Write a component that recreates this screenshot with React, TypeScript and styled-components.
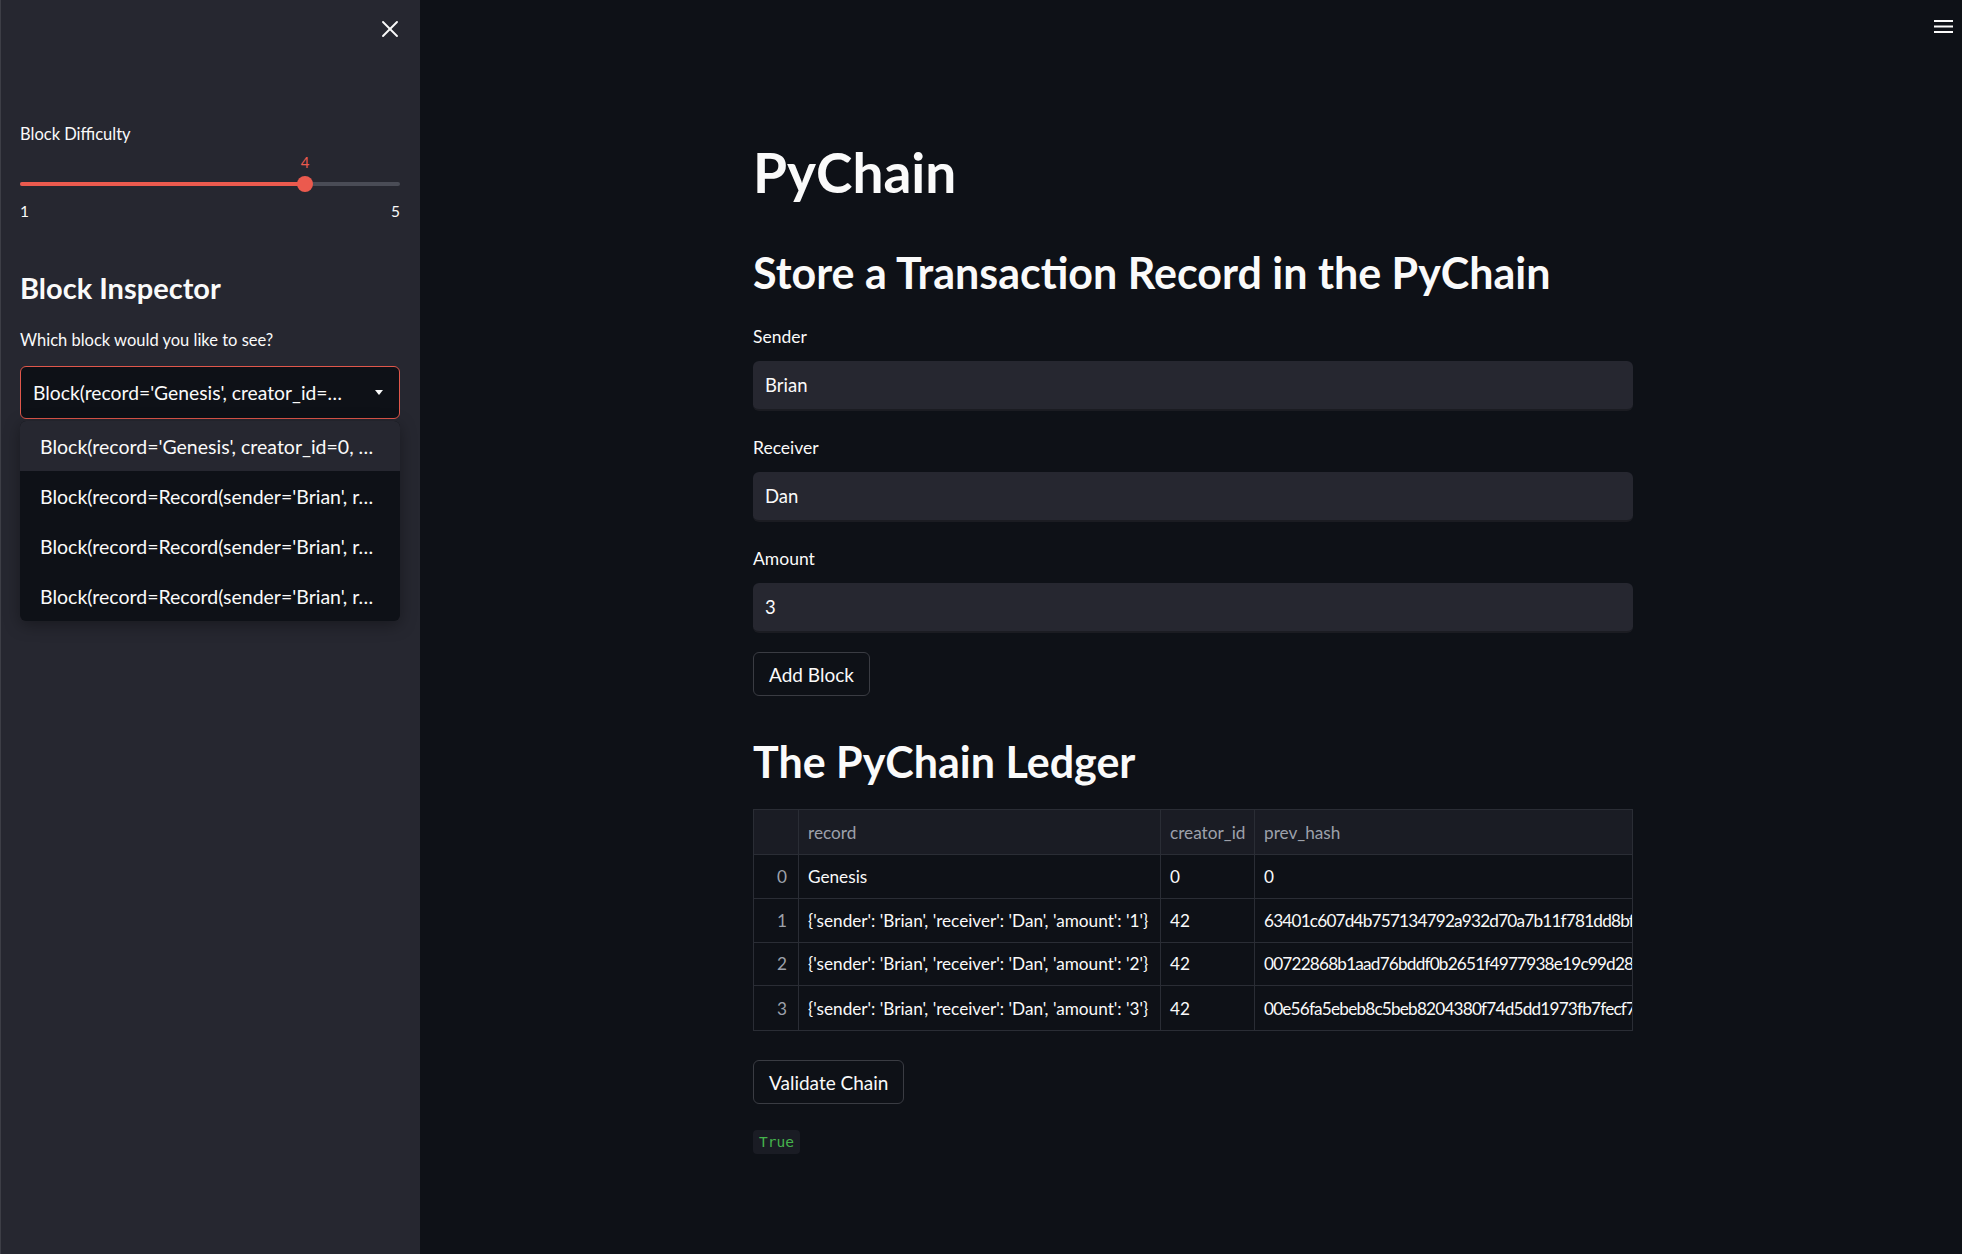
import React from 'react';
import styled, { createGlobalStyle } from 'styled-components';
import { X } from 'lucide-react';

const GlobalStyle = createGlobalStyle`
  html, body {
    margin: 0;
    padding: 0;
    background: #0e1117;
  }
  body {
    font-family: Lato, "Noto Sans", sans-serif;
    color: #fafafa;
    -webkit-font-smoothing: antialiased;
  }
  * {
    box-sizing: border-box;
  }
`;

const Shell = styled.div`
  display: flex;
  width: 100%;
  height: 100vh;
  overflow: hidden;
`;

const Sidebar = styled.aside`
  position: relative;
  display: flex;
  flex-direction: column;
  width: 420px;
  flex-shrink: 0;
  padding: 0 20px 0 19px;
  background: #262730;
  border-left: 1px solid #3d3e46;
`;

const CloseRow = styled.div`
  display: flex;
  justify-content: flex-end;
  align-items: center;
  height: 57px;
  margin-right: -4px;
`;

const IconButton = styled.button`
  display: flex;
  align-items: center;
  justify-content: center;
  width: 28px;
  height: 28px;
  padding: 0;
  border: none;
  background: transparent;
  color: #fafafa;
  cursor: pointer;
`;

const Label = styled.div<{ $top?: number; $size?: number }>`
  margin-top: ${(p) => p.$top ?? 0}px;
  font-size: ${(p) => p.$size ?? 17.5}px;
  line-height: 24px;
  color: #fafafa;
`;

const Slider = styled.div`
  display: flex;
  flex-direction: column;
`;

const ValueRow = styled.div`
  position: relative;
  height: 22px;
  margin-top: 5px;
`;

const ThumbValue = styled.span`
  position: absolute;
  top: 0;
  transform: translateX(-50%);
  font-size: 15px;
  line-height: 22px;
  color: #eb5a4e;
`;

const Track = styled.div`
  position: relative;
  height: 4px;
  margin-top: 9px;
  border-radius: 2px;
  background: #4a4c56;
`;

const TrackFill = styled.div`
  height: 100%;
  border-radius: 2px;
  background: #eb5a4e;
`;

const Thumb = styled.div`
  position: absolute;
  top: 50%;
  width: 16px;
  height: 16px;
  border-radius: 50%;
  background: #eb5a4e;
  transform: translate(-50%, -50%);
`;

const TickRow = styled.div`
  display: flex;
  justify-content: space-between;
  margin-top: 14px;
  font-size: 15.5px;
  line-height: 22px;
  color: #fafafa;
`;

const SideHeading = styled.h2`
  margin: 48px 0 0;
  font-size: 29px;
  line-height: 35px;
  font-weight: 700;
  color: #fafafa;
`;

const SelectWrap = styled.div`
  position: relative;
  margin-top: 14px;
`;

const SelectBox = styled.div`
  display: flex;
  align-items: center;
  height: 53px;
  padding: 0 16px 0 12px;
  border: 1px solid #e0574b;
  border-radius: 6px;
  background: #0e1117;
  font-size: 19.3px;
  white-space: nowrap;
`;

const SelectText = styled.span`
  flex: 1;
  overflow: hidden;
`;

const Caret = styled.span`
  width: 0;
  height: 0;
  border-left: 4.5px solid transparent;
  border-right: 4.5px solid transparent;
  border-top: 5px solid #fafafa;
`;

const Menu = styled.ul`
  position: absolute;
  top: calc(100% + 2px);
  left: 0;
  right: 0;
  margin: 0;
  padding: 0;
  list-style: none;
  border-radius: 6px;
  overflow: hidden;
  background: #0e1117;
  box-shadow: 0 4px 16px rgba(0, 0, 0, 0.35);
  z-index: 5;
`;

const MenuItem = styled.li<{ $active?: boolean }>`
  height: 50px;
  padding: 0 14px 0 20px;
  display: flex;
  align-items: center;
  font-size: 19.5px;
  white-space: nowrap;
  overflow: hidden;
  background: ${(p) => (p.$active ? '#262730' : 'transparent')};
`;

const Main = styled.main`
  display: flex;
  flex-direction: column;
  flex: 1;
  min-width: 0;
`;

const TopBar = styled.header`
  display: flex;
  justify-content: flex-end;
  align-items: center;
  height: 54px;
  padding-right: 8px;
`;

const Content = styled.section`
  display: flex;
  flex-direction: column;
  align-items: flex-start;
  width: 880px;
  margin: 85px auto 0;
  position: relative;
  left: 2px;
`;

const Title = styled.h1`
  margin: 0;
  font-size: 55px;
  line-height: 66px;
  font-weight: 700;
`;

const Heading = styled.h2<{ $top: number }>`
  margin: ${(p) => p.$top}px 0 0;
  font-size: 43px;
  line-height: 52px;
  font-weight: 700;
`;

const Field = styled.div<{ $top: number }>`
  display: flex;
  flex-direction: column;
  gap: 12px;
  width: 100%;
  margin-top: ${(p) => p.$top}px;
`;

const Input = styled.div`
  display: flex;
  align-items: center;
  height: 50px;
  padding: 0 12px;
  border-radius: 6px;
  border-bottom: 2px solid #1b1c22;
  background: #262730;
  font-size: 18.5px;
`;

const Button = styled.button<{ $top: number }>`
  margin-top: ${(p) => p.$top}px;
  height: 44px;
  padding: 0 15px;
  border: 1px solid #3a3c43;
  border-radius: 6px;
  background: #0e1117;
  color: #fafafa;
  font-family: inherit;
  font-size: 19px;
  cursor: pointer;
`;

const Table = styled.div`
  margin-top: 21px;
  width: 100%;
  border: 1px solid #2a2d35;
  overflow: hidden;
`;

const Row = styled.div<{ $head?: boolean }>`
  display: grid;
  grid-template-columns: 45px 362px 94px 1fr;
  height: ${(p) => (p.$head ? 45 : 43.8)}px;
  background: ${(p) => (p.$head ? '#1a1c24' : '#0e1117')};
  border-bottom: 1px solid #2a2d35;
  &:last-child {
    border-bottom: none;
  }
`;

const Cell = styled.div<{ $index?: boolean; $head?: boolean; $hash?: boolean }>`
  display: flex;
  align-items: center;
  justify-content: ${(p) => (p.$index ? 'flex-end' : 'flex-start')};
  padding: ${(p) => (p.$index ? '0 11px 0 0' : '0 0 0 9px')};
  border-right: 1px solid #2a2d35;
  overflow: hidden;
  white-space: nowrap;
  font-size: 17.2px;
  letter-spacing: ${(p) => (p.$hash ? '-0.8px' : 'normal')};
  color: ${(p) => (p.$index || p.$head ? '#9da1ab' : '#fafafa')};
  &:last-child {
    border-right: none;
  }
`;

const Code = styled.code`
  margin-top: 26px;
  height: 24px;
  padding: 0 6px;
  display: flex;
  align-items: center;
  border-radius: 4px;
  background: #1a1c24;
  color: #45b34c;
  font-family: "DejaVu Sans Mono", "Liberation Mono", monospace;
  font-size: 14.5px;
`;

const blocks = [
  { record: 'Genesis', creator: '0', hash: '0' },
  {
    record: "{'sender': 'Brian', 'receiver': 'Dan', 'amount': '1'}",
    creator: '42',
    hash: '63401c607d4b757134792a932d70a7b11f781dd8bf4c2e91a0d6b3f58c27e410',
  },
  {
    record: "{'sender': 'Brian', 'receiver': 'Dan', 'amount': '2'}",
    creator: '42',
    hash: '00722868b1aad76bddf0b2651f4977938e19c99d284a7fb05e13c6d9a82e71c4',
  },
  {
    record: "{'sender': 'Brian', 'receiver': 'Dan', 'amount': '3'}",
    creator: '42',
    hash: '00e56fa5ebeb8c5beb8204380f74d5dd1973fb7fecf7a2c9d61b08e43f5d92ab',
  },
];

const menuOptions = [
  "Block(record='Genesis', creator_id=0, …",
  "Block(record=Record(sender='Brian', r…",
  "Block(record=Record(sender='Brian', r…",
  "Block(record=Record(sender='Brian', r…",
];

function Hamburger() {
  return (
    <svg width="20" height="14" viewBox="0 0 20 14" fill="#fafafa">
      <rect x="0" y="0" width="19" height="2" />
      <rect x="0" y="5.5" width="19" height="2" />
      <rect x="0" y="11" width="19" height="2" />
    </svg>
  );
}

export default function App() {
  const difficulty = 4;
  const pct = ((difficulty - 1) / 4) * 100;

  return (
    <>
      <GlobalStyle />
      <Shell>
        <Sidebar>
          <CloseRow>
            <IconButton aria-label="Close sidebar">
              <X size={28} strokeWidth={1.6} />
            </IconButton>
          </CloseRow>

          <Label $top={65} $size={16.5}>Block Difficulty</Label>
          <Slider>
            <ValueRow>
              <ThumbValue style={{ left: `${pct}%` }}>{difficulty}</ThumbValue>
            </ValueRow>
            <Track>
              <TrackFill style={{ width: `${pct}%` }} />
              <Thumb style={{ left: `${pct}%` }} />
            </Track>
            <TickRow>
              <span>1</span>
              <span>5</span>
            </TickRow>
          </Slider>

          <SideHeading>Block Inspector</SideHeading>
          <Label $top={23} $size={16.5}>Which block would you like to see?</Label>
          <SelectWrap>
            <SelectBox>
              <SelectText>Block(record='Genesis', creator_id=…</SelectText>
              <Caret />
            </SelectBox>
            <Menu>
              {menuOptions.map((o, i) => (
                <MenuItem key={i} $active={i === 0}>
                  {o}
                </MenuItem>
              ))}
            </Menu>
          </SelectWrap>
        </Sidebar>

        <Main>
          <TopBar>
            <Hamburger />
          </TopBar>
          <Content>
            <Title>PyChain</Title>
            <Heading $top={42}>Store a Transaction Record in the PyChain</Heading>

            <Field $top={26}>
              <Label>Sender</Label>
              <Input>Brian</Input>
            </Field>
            <Field $top={25}>
              <Label>Receiver</Label>
              <Input>Dan</Input>
            </Field>
            <Field $top={25}>
              <Label>Amount</Label>
              <Input>3</Input>
            </Field>

            <Button $top={19}>Add Block</Button>

            <Heading $top={40}>The PyChain Ledger</Heading>

            <Table>
              <Row $head>
                <Cell $index $head />
                <Cell $head>record</Cell>
                <Cell $head>creator_id</Cell>
                <Cell $head>prev_hash</Cell>
              </Row>
              {blocks.map((b, i) => (
                <Row key={i}>
                  <Cell $index>{i}</Cell>
                  <Cell>{b.record}</Cell>
                  <Cell>{b.creator}</Cell>
                  <Cell $hash>{b.hash}</Cell>
                </Row>
              ))}
            </Table>

            <Button $top={29}>Validate Chain</Button>
            <Code>True</Code>
          </Content>
        </Main>
      </Shell>
    </>
  );
}
